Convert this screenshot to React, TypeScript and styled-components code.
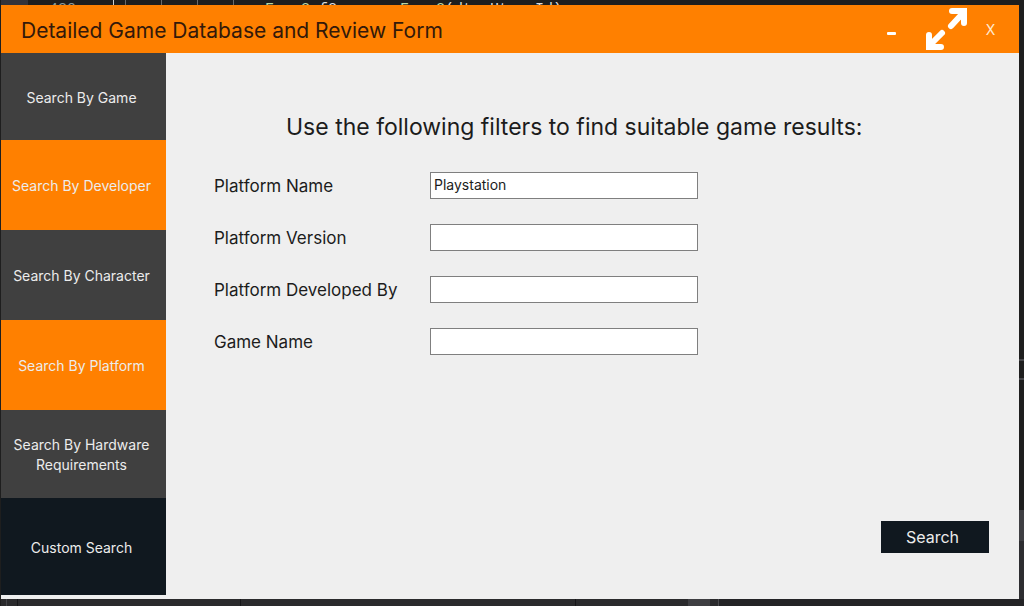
import React from "react";
import styled, { createGlobalStyle } from "styled-components";

const GlobalStyle = createGlobalStyle`
  * { box-sizing: border-box; }
  body { margin: 0; background: #1e1e1e; }
  button, input { font: inherit; color: inherit; }
`;

const Desktop = styled.div`
  min-height: 100vh;
  display: grid;
  grid-template-columns: minmax(0, 1fr) 5px;
  grid-template-rows: 5px 1fr 7px;
  padding-left: 1px;
  font-family: "Century Gothic", Inter, "Open Sans", sans-serif;
  font-weight: 400;
`;

const EditorLine = styled.pre`
  grid-column: 1 / -1;
  margin: 0;
  height: 5px;
  overflow: hidden;
  background:
    linear-gradient(90deg, #33333a 27px, transparent 27px),
    linear-gradient(90deg, transparent 112px, #d0d0d0 112px 113px, transparent 113px),
    repeating-linear-gradient(90deg, transparent 0 16px, #6a6a6a 16px 17px, transparent 17px 36px) 108px 0 / 144px 5px no-repeat,
    #1e1e1e;
  color: #dcdcdc;
  font: 15px/20px "Liberation Mono", monospace;
  padding-left: 48px;
`;

const Token = styled.span<{ $color: string }>`
  color: ${(p) => p.$color};
`;

const Window = styled.main`
  display: flex;
  flex-direction: column;
  background: #efefef;
`;

const TitleBar = styled.header`
  display: flex;
  align-items: center;
  height: 48px;
  padding: 0 17px 0 20px;
  background: #ff8000;
`;

const Title = styled.h1`
  flex: 1;
  margin: 0;
  padding-top: 3px;
  color: #33190a;
  font-size: 21px;
  font-weight: 400;
  line-height: 24px;
`;

const WindowControls = styled.div`
  display: flex;
  align-items: center;
`;

const ControlButton = styled.button<{ $width: number }>`
  display: flex;
  align-items: center;
  justify-content: center;
  width: ${(p) => p.$width}px;
  height: 48px;
  padding: 0;
  border: 0;
  background: none;
  color: #ffe9d2;
  font-size: 14px;
`;

const Body = styled.div`
  flex: 1;
  display: flex;
`;

const Sidebar = styled.nav`
  display: flex;
  flex-direction: column;
  width: 165px;
  flex-shrink: 0;
`;

const tones = { grey: "#404040", orange: "#ff8000", navy: "#10181f" };

const NavButton = styled.button<{ $tone: keyof typeof tones; $height: number }>`
  height: ${(p) => p.$height}px;
  padding: 2px 4px 0 0;
  border: 0;
  background: ${(p) => tones[p.$tone]};
  color: #ececec;
  font-size: 14px;
  line-height: 20px;
  white-space: pre-line;
`;

const Content = styled.section`
  flex: 1;
  display: flex;
  flex-direction: column;
  padding: 57px 30px 46px 48px;
  color: #1c1c1c;
`;

const Heading = styled.h2`
  margin: 0 0 28px 72px;
  font-size: 23px;
  font-weight: 400;
  line-height: 34px;
`;

const Form = styled.form`
  flex: 1;
  display: flex;
  flex-direction: column;
  gap: 25px;
`;

const Field = styled.div`
  display: grid;
  grid-template-columns: 216px 268px;
  align-items: center;
`;

const Label = styled.label`
  padding-top: 1px;
  font-size: 17px;
  line-height: 26px;
`;

const TextInput = styled.input`
  height: 27px;
  padding: 0 3px 2px;
  border: 1px solid #7f7f7f;
  border-radius: 0;
  background: #fff;
  font-size: 14px;
`;

const SubmitButton = styled.button`
  align-self: flex-end;
  margin-top: auto;
  width: 108px;
  height: 32px;
  padding: 0 5px 0 0;
  border: 0;
  background: #10181f;
  color: #ececec;
  font-size: 16px;
`;

const EditorSide = styled.div`
  background: linear-gradient(
    #1e1e1e 354px, #46464a 354px 356px, #1e1e1e 356px 373px, #46464a 373px 375px,
    #1e1e1e 375px 505px, #3e3e42 505px 536px, #2d2d30 536px
  );
`;

const EditorFooter = styled.div`
  grid-column: 1 / -1;
  background: linear-gradient(
    90deg,
    #2a2a2c 5px, #444448 5px 6px, #2a2a2c 6px 16px, #161618 16px 17px,
    #2a2a2c 17px 239px, #161618 239px 240px, #2a2a2c 240px 574px, #161618 574px 575px,
    #2a2a2c 575px 687px, #3e3e42 687px 709px, #2a2a2c 709px 717px, #4a4a4e 717px 718px,
    #232326 718px
  );
`;

const navItems: { text: string; tone: keyof typeof tones; height: number }[] = [
  { text: "Search By Game", tone: "grey", height: 87 },
  { text: "Search By Developer", tone: "orange", height: 90 },
  { text: "Search By Character", tone: "grey", height: 90 },
  { text: "Search By Platform", tone: "orange", height: 90 },
  { text: "Search By Hardware\nRequirements", tone: "grey", height: 88 },
  { text: "Custom Search", tone: "navy", height: 97 },
];

const fields = [
  { id: "platform-name", label: "Platform Name", value: "Playstation" },
  { id: "platform-version", label: "Platform Version", value: "" },
  { id: "platform-developer", label: "Platform Developed By", value: "" },
  { id: "game-name", label: "Game Name", value: "" },
];

export default function App() {
  return (
    <>
      <GlobalStyle />
      <Desktop>
        <EditorLine aria-hidden="true">
          <Token $color="#8a9a9a">430</Token>
          {" ".repeat(21)}
          <Token $color="#b8d7a3">Form2</Token>
          {" f2 = new "}
          <Token $color="#b8d7a3">Form2</Token>
          {"(dtemHtem.Id)"}
        </EditorLine>
        <Window>
          <TitleBar>
            <Title>Detailed Game Database and Review Form</Title>
            <WindowControls>
              <ControlButton $width={42} aria-label="Minimize">
                <svg width="10" height="12" viewBox="0 0 10 12">
                  <rect y="9" width="9" height="3" rx="1" fill="#fff" />
                </svg>
              </ControlButton>
              <ControlButton $width={66} aria-label="Maximize">
                <svg width="44" height="44" viewBox="0 0 44 44" fill="none" stroke="#fff" strokeWidth="6" strokeLinecap="round" strokeLinejoin="miter">
                  <path d="M27 19L39 6M28 4H40V16M18 26L6 38M5 28V40H17" />
                </svg>
              </ControlButton>
              <ControlButton $width={23} aria-label="Close">X</ControlButton>
            </WindowControls>
          </TitleBar>
          <Body>
            <Sidebar>
              {navItems.map((item) => (
                <NavButton key={item.text} $tone={item.tone} $height={item.height}>
                  {item.text}
                </NavButton>
              ))}
            </Sidebar>
            <Content>
              <Heading>Use the following filters to find suitable game results:</Heading>
              <Form onSubmit={(e) => e.preventDefault()}>
                {fields.map((field) => (
                  <Field key={field.id}>
                    <Label htmlFor={field.id}>{field.label}</Label>
                    <TextInput id={field.id} defaultValue={field.value} />
                  </Field>
                ))}
                <SubmitButton type="submit">Search</SubmitButton>
              </Form>
            </Content>
          </Body>
        </Window>
        <EditorSide />
        <EditorFooter />
      </Desktop>
    </>
  );
}
